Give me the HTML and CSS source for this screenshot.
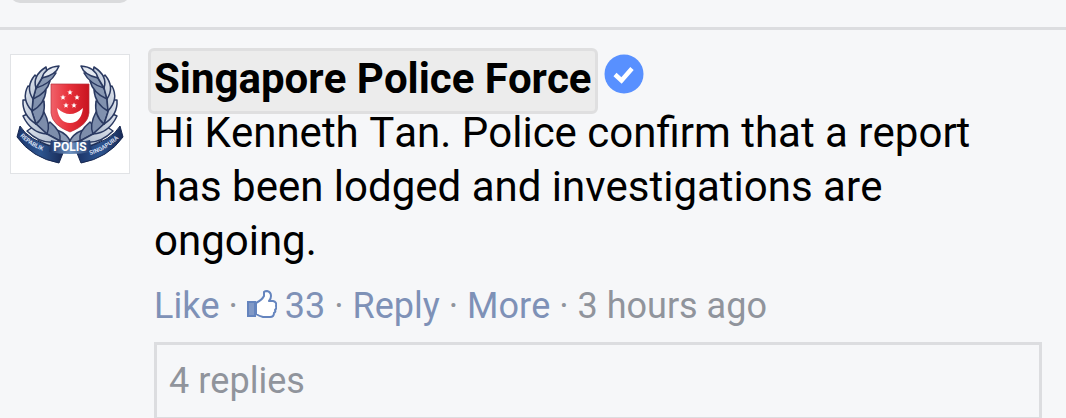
FILE: index.html
```html
<!DOCTYPE html>
<html lang="en">
<head>
<meta charset="utf-8">
<meta name="viewport" content="width=device-width, initial-scale=1">
<title>Comments</title>
<link rel="stylesheet" href="styles.css">
</head>
<body>
<div class="previous"><div class="previous-box"></div></div>
<article class="comment">
  <a class="avatar" href="#" aria-label="Singapore Police Force">
    <svg viewBox="0 0 120 120" aria-hidden="true">
      <defs>
        <linearGradient id="red" x1="0" x2="1"><stop offset="0" stop-color="#f0626a"/><stop offset=".45" stop-color="#e8323c"/><stop offset="1" stop-color="#c8141f"/></linearGradient>
        <linearGradient id="navy" x1="0" x2="1"><stop offset="0" stop-color="#1c3468"/><stop offset=".5" stop-color="#2d5590"/><stop offset="1" stop-color="#182a56"/></linearGradient>
        <linearGradient id="scroll" x1="0" x2="1"><stop offset="0" stop-color="#1c3468"/><stop offset=".5" stop-color="#6f93c0"/><stop offset="1" stop-color="#1c3468"/></linearGradient>
        <linearGradient id="leaf" x1="0" x2="1" y2="1"><stop offset="0" stop-color="#e4e9f1"/><stop offset="1" stop-color="#a9b6ca"/></linearGradient>
        <g id="branch" stroke="#2a3961" stroke-width="1.5" stroke-linejoin="round">
          <path fill="#8c9bb5" d="M61 89Q58 80 47 76L43 79L50 87Z"/>
          <path fill="url(#leaf)" d="M60 90Q44 97 28 86L38 80L50 87Z"/>
          <path fill="#7d8dab" d="M50 87Q52 78 40 68L34 74L37 80Z"/>
          <path fill="url(#leaf)" d="M50 87Q32 92 17 77L27 70L37 80Z"/>
          <path fill="#7d8dab" d="M37 80Q41 71 34 58L27 63L26 70Z"/>
          <path fill="url(#leaf)" d="M37 80Q21 79 13 62L22 58L26 70Z"/>
          <path fill="#8191ae" d="M26 70Q36 62 34 47L25 50L22 58Z"/>
          <path fill="url(#leaf)" d="M26 70Q12 61 13 46L23 46L22 58Z"/>
          <path fill="#8191ae" d="M22 57Q35 50 36 36L27 37L23 45Z"/>
          <path fill="url(#leaf)" d="M22 57Q11 45 18 32L26 35L23 45Z"/>
          <path fill="#8797b2" d="M23 45Q37 39 40 27L31 26L26 34Z"/>
          <path fill="url(#leaf)" d="M23 45Q15 33 25 21L30 26L26 34Z"/>
          <path fill="#8797b2" d="M26 34Q40 30 46 19L36 18L32 24Z"/>
          <path fill="url(#leaf)" d="M26 34Q22 22 36 13L37 18L32 24Z"/>
          <path fill="#e4e9f1" d="M32 24Q35 13 49 12Q46 21 32 24Z"/>
        </g>
      </defs>
      <rect x=".5" y=".5" width="119" height="119" fill="#fff" stroke="#e1e3e6"/>
      <use href="#branch"/>
      <use href="#branch" transform="translate(120 0) scale(-1 1)"/>
      <path fill="url(#red)" stroke="#b7323d" stroke-width=".7" d="M41 30H79V59Q78 71 60 78Q42 71 41 59Z"/>
      <path fill="#fff" d="M47 54Q60 66 73 54Q71 69 60 69Q49 69 47 54Z"/>
      <g fill="#fff">
        <path id="star" d="M60 35.500l.8 1.900 2 .1-1.600 1.300.5 2-1.700-1.100-1.700 1.100.5-2-1.600-1.300 2-.1Z"/>
        <use href="#star" x="-7" y="5"/><use href="#star" x="7" y="5"/>
        <use href="#star" x="-4" y="13"/><use href="#star" x="4" y="13"/>
      </g>
      <path fill="url(#navy)" stroke="#172750" d="M10 72Q18 86 45 94L53 99L49 109Q22 104 7 83Z"/>
      <path fill="url(#navy)" stroke="#172750" d="M110 72Q102 86 75 94L67 99L71 109Q98 104 113 83Z"/>
      <path fill="url(#scroll)" d="M41 86Q60 91 80 86L82 98Q60 102 39 98Z"/>
      <path id="left-curve" fill="none" d="M10 82Q21 94 42 100"/>
      <path id="right-curve" fill="none" d="M80 101Q98 96 112 81"/>
      <text class="motto" x="60" y="97" text-anchor="middle">POLIS</text>
      <text class="motto-small"><textPath href="#left-curve">REPABLIK</textPath></text>
      <text class="motto-small"><textPath href="#right-curve">SINGAPURA</textPath></text>
    </svg>
  </a>
  <div class="content">
    <header class="heading">
      <a class="author" href="#">Singapore Police Force</a>
      <svg class="verified" viewBox="0 0 40 40" role="img" aria-label="Verified"><circle cx="20" cy="20" r="19.500" fill="#5890ff"/><path d="M11 20.500L17.500 26.500L28 14.500" fill="none" stroke="#fff" stroke-width="4.500"/></svg>
    </header>
    <p class="message">Hi Kenneth Tan. Police confirm that a report has been lodged and investigations are ongoing.</p>
    <div class="actions">
      <a href="#">Like</a> ·
      <a href="#" aria-label="33 likes"><svg class="thumb" viewBox="0 0 30 28" aria-hidden="true"><path fill="#fff" stroke="#6484be" stroke-width="2" stroke-linejoin="round" d="M9 13Q15 10 17 6V2Q18 1 20 1Q24 2 24 6Q24 9 22 11H26Q30 12 29 16Q30 18 28 20Q29 22 27 23Q27 27 23 27H16Q12 26 9 24Z"/><path fill="#8199c6" stroke="#6484be" stroke-width="2" d="M1 12H8V26H1Z"/></svg>33</a> ·
      <a href="#">Reply</a> ·
      <a href="#">More</a> ·
      <time>3 hours ago</time>
    </div>
    <a class="replies" href="#">4 replies</a>
  </div>
</article>
</body>
</html>
```
FILE: styles.css
```css
* { box-sizing: border-box; }
html { overflow: hidden; }
body {
  margin: 0;
  background: #f6f7f9;
  color: #000;
  font-family: Roboto, "Liberation Sans", sans-serif;
  font-kerning: none;
}
a { color: inherit; text-decoration: none; }
.previous {
  height: 30px;
  padding-left: 10px;
  overflow: hidden;
  border-bottom: 3px solid #dcdde0;
}
.previous-box {
  width: 120px;
  height: 20px;
  margin-top: -17px;
  background: #dadbdd;
  border-radius: 10px;
}
.comment {
  display: flex;
  align-items: flex-start;
  gap: 24px;
  padding: 18px 24px 0 10px;
}
.avatar { flex: 0 0 120px; margin-top: 6px; }
.avatar svg { display: block; width: 120px; height: 120px; }
.motto { fill: #fff; font: bold 12px Roboto, sans-serif; }
.motto-small { fill: #d4def0; font: bold 6px Roboto, sans-serif; }
.content { flex: 1; min-width: 0; }
.heading { display: flex; align-items: flex-start; gap: 6px; }
.author {
  margin-left: -6px;
  padding: 0 3px 4px;
  border: 3px solid #dfdfe0;
  border-radius: 6px;
  background: #ececec;
  font-size: 42px;
  font-weight: 700;
  line-height: 56px;
}
.verified { width: 40px; height: 40px; margin-top: 6px; }
.message {
  margin: -8px 0 0;
  font-size: 42px;
  line-height: 54px;
}
.actions {
  margin-top: 17px;
  color: #90949c;
  font-size: 36px;
  line-height: 42px;
}
.actions a { color: #7e91b7; }
.thumb { width: 30px; height: 28px; margin-right: 8px; }
.replies {
  display: block;
  margin-top: 15px;
  padding: 14px 12px 13px;
  border: 3px solid #dcdde0;
  color: #90949c;
  font-size: 36px;
  line-height: 45px;
}
```
